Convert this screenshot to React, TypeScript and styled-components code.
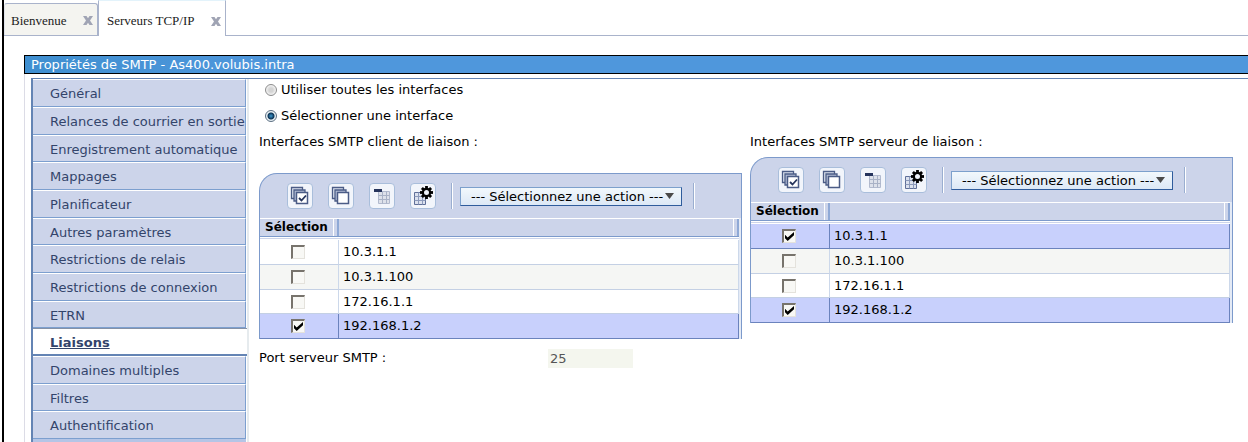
import React from "react";
import styled, { createGlobalStyle, css } from "styled-components";

const Page = createGlobalStyle`
  * { box-sizing: border-box; }
  body {
    margin: 0;
    background: #fff;
    color: #000;
    font: 13px/20px "DejaVu Sans", Verdana, sans-serif;
    overflow: hidden;
  }
`;

const Frame = styled.div`
  display: flex;
  flex-direction: column;
  min-height: 100vh;
  margin-left: 2px;
  border-left: 2px solid #000;
`;

const TabBar = styled.div`
  display: flex;
  align-items: flex-end;
  height: 36px;
  border-bottom: 1px solid #a9b3cb;
`;

const Tab = styled.div<{ $active?: boolean }>`
  display: flex;
  align-items: center;
  justify-content: space-between;
  font: 13px/16px "Liberation Serif", serif;
  border: 1px solid #a9b3cb;
  ${(p) =>
    p.$active
      ? css`
          width: 128px;
          height: 36px;
          padding: 5px 4px 0 8px;
          margin-bottom: -1px;
          background: #fff;
          border-top-color: #e3f3fb;
          border-bottom: 0;
        `
      : css`
          width: 94px;
          height: 32px;
          padding: 2px 4px 0 6px;
          background: #f4f4f0;
          border-left-color: #dfe3ea;
          border-radius: 3px 3px 0 0;
          border-bottom: 0;
        `}
`;

const TabLink = styled.a`
  color: #222;
  text-decoration: none;
`;

const CloseButton = styled.button`
  display: flex;
  padding: 0;
  border: 0;
  background: none;
`;

const Title = styled.h1`
  margin: 19px 0 0 20px;
  padding-left: 6px;
  border: 1px solid #000;
  border-right: 0;
  background: linear-gradient(90deg, #3f8fd0, #4f97dc 240px);
  color: #fff;
  font-size: 13px;
  font-weight: normal;
  line-height: 17px;
`;

const Notebook = styled.div`
  display: flex;
  flex: 1;
  margin-left: 20px;
  padding: 4px 0 0 6px;
  border-left: 1px solid #dcdce6;
`;

const Columns = styled.div`
  display: flex;
  flex: 1;
  border-top: 1px solid #6484b4;
  border-left: 2px solid #6484b4;
`;

const Menu = styled.nav`
  width: 216px;
  flex: none;
  border-right: 2px solid #e6ebee;
  background: linear-gradient(#b4c5e6, #b4c5e6) no-repeat 0 0 / 213px 100%;
`;

const MenuLink = styled.a<{ $active?: boolean }>`
  display: block;
  height: 28px;
  margin-right: ${(p) => (p.$active ? 0 : 1)}px;
  padding-left: 17px;
  line-height: 27px;
  border-top: 1px solid #fff;
  border-bottom: 1px solid #7c9fcf;
  border-right: 1px solid #7c9fcf;
  background: #ccd4ea;
  color: #33446b;
  text-decoration: none;
  white-space: nowrap;
  &:nth-child(3n) { height: 27px; }
  ${(p) =>
    p.$active &&
    css`
      background: #fff;
      border-top-color: #8591a6;
      border-bottom: 2px solid #6484b4;
      border-right: 0;
      font-weight: bold;
      text-decoration: underline;
    `}
`;

const Content = styled.main`
  flex: 1;
  min-width: 0;
  padding: 1px 15px 0 10px;
`;

const RadioLabel = styled.label`
  display: flex;
  align-items: center;
  gap: 4px;
  height: 20px;
  margin: 0 0 6px 6px;
`;

const Radio = styled.input`
  appearance: none;
  width: 12px;
  height: 12px;
  margin: 0;
  border: 1px solid #8c8c8c;
  border-radius: 50%;
  background: radial-gradient(circle, #d4d4d4 2px, #f4f4f4 5px);
  &:checked {
    border-color: #5c6f82;
    background: radial-gradient(circle, #3f9ad0 0, #0b3253 3px, #e8f0f4 4px);
  }
`;

const Lists = styled.div`
  display: flex;
  align-items: flex-start;
  gap: 8px;
`;

const List = styled.section`
  flex: 1;
  min-width: 0;
`;

const ListTitle = styled.h2<{ $gap: number }>`
  margin: 0 0 ${(p) => p.$gap}px;
  font-size: 13px;
  font-weight: normal;
  line-height: 20px;
`;

const Panel = styled.div`
  border: 1px solid #7c9acb;
  border-bottom: 0;
  border-top-left-radius: 18px;
  background: #ccd4ea;
`;

const Toolbar = styled.div`
  display: flex;
  align-items: center;
  height: 44px;
  padding-left: 27px;
`;

const ToolButton = styled.button`
  display: flex;
  align-items: center;
  justify-content: center;
  width: 26px;
  height: 26px;
  margin-right: 15px;
  padding: 0;
  border: 1px solid #a9bedb;
  border-radius: 4px;
  background: #f2f5fb;
`;

const Divider = styled.span`
  width: 2px;
  height: 26px;
  border-left: 1px solid #9aaed0;
  background: #fff;
`;

const SelectBox = styled.span`
  display: grid;
  align-items: center;
  width: 222px;
  margin: 0 11px 0 7px;
  > * { grid-area: 1 / 1; }
  > svg { justify-self: end; margin-right: 8px; pointer-events: none; }
`;

const Select = styled.select`
  appearance: none;
  width: 100%;
  height: 19px;
  padding: 0 0 0 10px;
  border: 1px solid #7ca0cc;
  border-right-color: #2f5c9c;
  border-bottom-color: #2f5c9c;
  border-radius: 0;
  background: linear-gradient(#f2f8fc, #dce8f6);
  color: #000;
  font: 13px/17px "DejaVu Sans", Verdana, sans-serif;
`;

const Table = styled.table`
  width: 100%;
  border-collapse: separate;
  border-spacing: 0;
  border-right: 2px solid #e4eaf5;
  background: #fff;
  table-layout: fixed;
`;

const HeadCell = styled.th<{ $width?: number }>`
  width: ${(p) => (p.$width ? `${p.$width}px` : "auto")};
  height: 19px;
  padding: 0;
  border-top: 1px solid #fff;
  border-bottom: 1px solid #7c9acb;
  background: #ccd4ea;
  font-size: 12px;
  line-height: 17px;
`;

const HeadInner = styled.div`
  height: 17px;
  padding-left: 5px;
  border-right: 2px solid #8fa9d6;
  box-shadow: inset -3px 0 #ccd4ea, inset -4px 0 #fff;
  text-align: left;
`;

const SpacerCell = styled.td`
  height: 3px;
  padding: 0;
  border-top: 1px solid #fff;
  border-bottom: 1px solid #fff;
  background: #ccd4ea;
`;

const Row = styled.tr<{ $tone: string }>`
  background: ${(p) => p.$tone};
`;

const Cell = styled.td<{ $on: boolean; $check?: boolean }>`
  height: 25px;
  padding: ${(p) => (p.$check ? "0" : "0 0 0 4px")};
  border-right: 1px solid ${(p) => (p.$on ? "#6b83bd" : "#ccd8ea")};
  border-bottom: 1px solid ${(p) => (p.$on ? "#6b83bd" : "#c4d0e4")};
  ${Row}:nth-child(4) > & { height: 24px; }
`;

const Check = styled.input`
  appearance: none;
  display: block;
  width: 14px;
  height: 14px;
  margin: 0 0 0 31px;
  border: 2px solid;
  border-width: 2px 1px 1px 2px;
  border-color: #77736c #e4e2dc #e4e2dc #77736c;
  background: #f8f8f5;
  &:checked::before {
    content: "";
    display: block;
    width: 9px;
    height: 9px;
    margin: 1px;
    background: #000;
    clip-path: polygon(0 30%, 30% 60%, 100% 0, 100% 35%, 30% 100%, 0 70%);
  }
`;

const PortRow = styled.div`
  display: flex;
  align-items: center;
  margin-top: 9px;
  > label { width: 289px; }
`;

const PortInput = styled.input`
  width: 85px;
  height: 19px;
  padding: 0 2px;
  border: 0;
  background: #f4f6ee;
  color: #555;
  font: 13px/19px "DejaVu Sans", Verdana, sans-serif;
`;

const Cross = () => (
  <svg width="10" height="9" viewBox="0 0 10 9" aria-hidden="true">
    <path d="M0 0h3.500L5 2.300 6.500 0H10L7 4.500 10 9H6.500L5 6.700 3.500 9H0l3-4.500z" fill="#a0a4b4" />
  </svg>
);

const Stack = ({ checked }: { checked?: boolean }) => (
  <svg width="20" height="20" viewBox="0 0 20 20" stroke="#4b5c86" aria-hidden="true">
    <path d="M1.500 1.500h11v11h-11z" fill="#dfe4f0" strokeWidth="1.300" />
    <path d="M4 4h11v11H4z" fill="#b4bed6" strokeWidth="1.300" />
    <path d="M6.500 6.500h11v11h-11z" fill="#fff" strokeWidth="1.500" />
    {checked && <path d="M9 12l2.500 2.500 4.500-5" fill="none" stroke="#26345c" strokeWidth="1.800" />}
  </svg>
);

const toothAngles = [0, 45, 90, 135, 180, 225, 270, 315];

const Grid = ({ gear }: { gear?: boolean }) => (
  <svg width="22" height="22" viewBox="0 0 22 22" aria-hidden="true">
    {gear ? (
      <>
        <path d="M2.500 7.500h11v12h-11z" fill="#dbe1ee" stroke="#5f6f98" />
        <path d="M2.500 11.500h11M2.500 15.500h11M6.500 7.500v12M10.500 7.500v12" stroke="#8c9abb" fill="none" />
        <g transform="translate(14.500 7.500)">
          {toothAngles.map((a) => (
            <path key={a} d="M-1.400-6.500h2.800v3h-2.800z" transform={`rotate(${a})`} />
          ))}
          <circle r="3.600" fill="#eef2fa" stroke="#000" strokeWidth="2.200" />
        </g>
      </>
    ) : (
      <>
        <path d="M7.500 6.500h11v12h-11z" fill="#dde1ea" stroke="#b2bace" />
        <path d="M7.500 10.500h11M7.500 14.500h11M11.500 6.500v12M15.500 6.500v12" stroke="#a9b2c6" fill="none" />
        <path d="M3 4h8v3H3z" fill="#26345c" />
      </>
    )}
  </svg>
);

type Entry = { ip: string; on: boolean; tone: string };

const SELECTED = "#c8d0fc";
const clientEntries: Entry[] = [
  { ip: "10.3.1.1", on: false, tone: "#fff" },
  { ip: "10.3.1.100", on: false, tone: "#f5f6f4" },
  { ip: "172.16.1.1", on: false, tone: "#fff" },
  { ip: "192.168.1.2", on: true, tone: SELECTED },
];
const serverEntries: Entry[] = [
  { ip: "10.3.1.1", on: true, tone: SELECTED },
  { ip: "10.3.1.100", on: false, tone: "#f5f6f4" },
  { ip: "172.16.1.1", on: false, tone: "#fff" },
  { ip: "192.168.1.2", on: true, tone: SELECTED },
];

const menu = [
  "Général",
  "Relances de courrier en sortie",
  "Enregistrement automatique",
  "Mappages",
  "Planificateur",
  "Autres paramètres",
  "Restrictions de relais",
  "Restrictions de connexion",
  "ETRN",
  "Liaisons",
  "Domaines multiples",
  "Filtres",
  "Authentification",
];

const InterfaceList = ({ title, gap, entries }: { title: string; gap: number; entries: Entry[] }) => (
  <List>
    <ListTitle $gap={gap}>{title}</ListTitle>
    <Panel>
      <Toolbar>
        <ToolButton aria-label="Tout sélectionner"><Stack checked /></ToolButton>
        <ToolButton aria-label="Tout désélectionner"><Stack /></ToolButton>
        <ToolButton aria-label="Réduire le tableau"><Grid /></ToolButton>
        <ToolButton aria-label="Configurer les colonnes"><Grid gear /></ToolButton>
        <Divider />
        <SelectBox>
          <Select aria-label="Action">
            <option>--- Sélectionnez une action ---</option>
          </Select>
          <svg width="9" height="6" viewBox="0 0 9 6" aria-hidden="true">
            <path d="M0 0h9L4.500 6z" fill="#4a4a4a" />
          </svg>
        </SelectBox>
        <Divider />
      </Toolbar>
      <Table>
        <thead>
          <tr>
            <HeadCell $width={79}><HeadInner>Sélection</HeadInner></HeadCell>
            <HeadCell><HeadInner /></HeadCell>
          </tr>
        </thead>
        <tbody>
          <tr><SpacerCell colSpan={2} /></tr>
          {entries.map((e) => (
            <Row key={e.ip} $tone={e.tone}>
              <Cell $on={e.on} $check>
                <Check type="checkbox" aria-label={e.ip} defaultChecked={e.on} />
              </Cell>
              <Cell $on={e.on}>{e.ip}</Cell>
            </Row>
          ))}
        </tbody>
      </Table>
    </Panel>
  </List>
);

export default function App() {
  return (
    <>
      <Page />
      <Frame>
        <TabBar>
          <Tab>
            <TabLink href="#bienvenue">Bienvenue</TabLink>
            <CloseButton aria-label="Fermer Bienvenue"><Cross /></CloseButton>
          </Tab>
          <Tab $active>
            <TabLink href="#serveurs">Serveurs TCP/IP</TabLink>
            <CloseButton aria-label="Fermer Serveurs TCP/IP"><Cross /></CloseButton>
          </Tab>
        </TabBar>
        <Title>Propriétés de SMTP - As400.volubis.intra</Title>
        <Notebook>
          <Columns>
            <Menu>
              {menu.map((m) => (
                <MenuLink key={m} href="#" $active={m === "Liaisons"}>{m}</MenuLink>
              ))}
            </Menu>
            <Content>
              <RadioLabel><Radio type="radio" name="scope" />Utiliser toutes les interfaces</RadioLabel>
              <RadioLabel><Radio type="radio" name="scope" defaultChecked />Sélectionner une interface</RadioLabel>
              <Lists>
                <InterfaceList title="Interfaces SMTP client de liaison :" gap={21} entries={clientEntries} />
                <InterfaceList title="Interfaces SMTP serveur de liaison :" gap={5} entries={serverEntries} />
              </Lists>
              <PortRow>
                <label htmlFor="port">Port serveur SMTP :</label>
                <PortInput id="port" defaultValue="25" disabled />
              </PortRow>
            </Content>
          </Columns>
        </Notebook>
      </Frame>
    </>
  );
}
